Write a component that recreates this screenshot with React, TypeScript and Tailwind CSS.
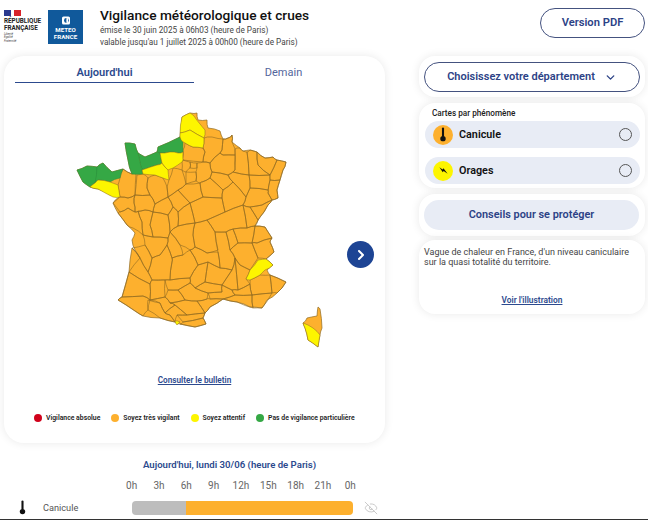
import { ChevronDown, ChevronRight, EyeOff } from "lucide-react";

const ORANGE = "#fdb02e";
const YELLOW = "#fdf500";
const GREEN = "#35a845";
const BORDER = "#8f6a22";

type Pt = [number, number];

const parse = (s: string): Pt[] =>
  s.split(" ").map((p) => p.split(",").map(Number) as Pt);

// wiggle every edge a bit so the borders don't look ruled. Same edge, same wiggle
const toPath = (s: string) => {
  const pts = parse(s);
  let d = "";
  pts.forEach((a, i) => {
    const b = pts[(i + 1) % pts.length];
    const sx = a[0] + b[0];
    const sy = a[1] + b[1];
    const mx = sx / 2 + Math.sin(sx * 12.9 + sy * 78.2) * 0.55;
    const my = sy / 2 + Math.sin(sx * 39.3 + sy * 17.7) * 0.55;
    d += `${i === 0 ? "M" : "L"}${a[0]},${a[1]} L${mx.toFixed(1)},${my.toFixed(1)} `;
  });
  return d + "Z";
};

const mainland =
  "190,113 197,113 198,120 207,120 208,128 220,131 223,139 228,138 232,135 232,142 240,148 243,151 250,150 257,152 265,158 273,157 277,160 286,162 283,170 280,180 277,190 278,198 272,200 268,205 260,217 255,226 265,227 272,238 270,242 274,252 266,259 273,265 267,270 270,275 286,282 277,293 267,300 262,308 250,307 237,302 223,299 210,307 205,313 203,318 206,324 195,327 180,324 175,322 160,318 143,316 135,311 118,300 122,297 129,272 132,248 140,258 135,250 132,240 135,233 127,225 118,213 113,203 119,197 110,195 98,189 90,187 83,182 77,170 87,166 97,167 103,163 112,172 123,169 132,174 128,160 125,143 135,144 138,153 145,157 157,152 158,147 180,137 182,117";

const corsica = "303,323 307,318 317,316 318,307 320,309 322,328 320,335 318,347 308,340 305,328";
const corsicaSud = "303,323 313,328 320,335 318,347 308,340 305,328";

const greens = [
  "157,152 158,147 180,137 183,142 183,152 178,153 170,152 160,153",
  "138,153 145,157 157,152 160,153 162,163 157,165 142,170 141,167",
  "125,143 135,144 138,153 141,167 142,170 143,174 132,174 128,160",
  "77,170 87,166 97,167 96,183 95,183 90,187 83,182",
  "97,167 103,163 112,172 123,169 120,178 110,182 98,180 95,183",
];

const yellows = [
  "182,117 190,113 194,116 200,124 205,130 204,138 190,130 180,133",
  "180,133 190,130 204,138 203,148 193,147 185,143 183,142 180,137",
  "95,183 98,180 110,182 118,185 120,197 113,197 98,189 90,187",
  "142,170 157,165 162,163 168,170 169,180 163,178 155,175 143,174",
  "160,153 170,152 178,153 183,152 183,160 182,162 173,168 168,170 162,163",
  "246,279 250,270 258,260 266,259 273,265 265,270 260,275 250,280",
  "175,321 180,322 177,325",
  corsicaSud,
];

const departments = [
  "120,178 118,185 120,197 128,198 135,195 136,174 132,174 123,169",
  "137,175 143,174 148,178 147,188 150,195 135,195",
  "148,178 155,175 163,178 167,187 168,197 155,204 150,195 147,188",
  "120,197 128,198 135,195 134,203 135,212 128,208 120,212 113,203",
  "135,195 150,195 155,204 153,212 145,210 135,212 134,203",
  "120,212 128,208 135,212 138,211 142,222 143,235 133,228 127,225 118,213",
  "138,211 145,210 153,212 150,225 153,237 143,235 142,222",
  "153,212 168,215 170,232 168,238 153,237 150,225",
  "155,204 168,197 173,207 168,215 153,212",
  "168,197 178,190 190,203 178,212 173,207",
  "168,215 173,207 178,212 178,226 170,232",
  "178,212 190,203 195,223 178,226",
  "169,180 173,168 182,170 186,184 178,190 168,197 167,187",
  "186,184 200,183 203,197 190,203 178,190",
  "183,157 183,160 203,162 205,152 203,148 193,147 185,143 183,150",
  "183,160 182,162 182,170 186,172 190,168 190,162",
  "190,162 197,163 197,168 190,168",
  "186,172 196,172 196,181 186,184",
  "197,163 203,162 210,163 212,172 210,178 202,182 200,183 196,181 196,172 197,168",
  "204,138 212,137 223,139 222,150 220,153 210,163 203,162 205,152 203,148",
  "223,139 228,138 232,135 232,142 235,149 235,155 223,155 220,153 222,150",
  "210,163 220,153 223,155 235,155 235,170 233,172 228,175 212,172",
  "210,178 212,172 228,175 233,182 223,190",
  "202,182 210,178 223,190 222,198 203,197 200,183",
  "235,149 240,148 243,151 247,152 249,175 233,172 235,170",
  "247,152 250,150 257,152 258,165 270,175 249,175",
  "257,152 265,158 273,157 277,160 270,175 258,165",
  "277,160 286,162 283,170 280,180 270,180 270,175",
  "270,180 280,180 277,190 278,198 272,200 268,193",
  "249,175 270,175 270,180 268,190 250,188",
  "250,188 268,190 268,193 272,200 262,205 250,207 243,205 246,197",
  "250,207 262,205 272,200 268,205 258,220",
  "243,205 250,207 258,220 255,226 247,228",
  "233,172 249,175 250,188 246,197 233,182 228,175",
  "223,190 233,182 246,197 243,205 225,212 222,198",
  "203,197 222,198 225,212 207,220 195,223 190,203",
  "207,220 225,212 243,205 247,228 233,229 226,232 215,232",
  "195,223 207,220 215,232 218,250 207,253 195,247 193,235",
  "178,226 195,223 193,235 195,247 190,250 180,245 170,232",
  "170,232 180,245 183,255 172,258 167,245 168,238",
  "143,235 153,237 168,238 167,245 160,255 152,258 145,245",
  "132,248 145,245 152,258 148,272 140,258",
  "152,258 160,255 167,245 172,258 172,262 170,280 152,280 148,272",
  "129,272 140,258 148,272 152,280 150,284",
  "195,247 207,253 218,252 220,268 208,262 198,265 190,250",
  "172,258 183,255 190,250 198,265 190,278 170,280 172,262",
  "198,265 208,262 205,282 195,288 190,283 190,278",
  "208,262 220,268 232,270 222,285 205,282",
  "215,232 226,232 230,250 235,258 232,270 220,268 218,252",
  "226,232 233,229 238,243 230,250",
  "233,229 247,228 255,226 252,243 238,243",
  "230,250 238,243 252,243 258,258 250,270 240,265 235,258",
  "255,226 265,227 272,238 257,243 252,243",
  "257,243 272,238 270,242 274,252 266,259 258,258 252,243",
  "235,258 240,265 250,270 246,279 250,284 238,290",
  "232,270 235,258 238,290 232,290 222,285",
  "205,282 222,285 222,292 208,293 195,288",
  "222,285 232,290 235,295 223,299 210,299 208,293 222,292",
  "232,290 238,290 250,284 252,295 235,295",
  "235,295 252,295 253,308 237,302 223,299",
  "252,295 272,293 262,308 253,308",
  "270,275 286,282 277,293 272,293",
  "250,280 260,275 270,275 272,293 252,295 250,284",
  "170,280 190,278 190,283 178,290 168,290 165,280",
  "190,283 195,288 208,293 207,299 197,301 185,300 178,290",
  "168,290 178,290 185,300 170,303 165,297",
  "170,303 185,300 197,301 205,313 187,315 175,305",
  "197,301 207,299 210,299 223,299 210,307 205,313",
  "187,315 205,313 203,318 183,322 177,315",
  "183,322 203,318 206,324 195,327 180,324",
  "175,305 187,315 177,315 175,322 170,315 165,313",
  "152,280 165,280 165,297 150,300 150,284",
  "129,272 150,284 150,300 143,296 122,297",
  "122,297 143,296 150,300 148,310 143,316 135,311 118,300",
  "148,300 160,303 165,313 170,315 175,322 160,318 148,310",
  "150,300 165,297 170,303 175,305 165,313 160,303",
];

const FranceMap = () => (
  <svg viewBox="70 105 260 245" className="h-[245px] w-[260px]" strokeLinejoin="round">
    <path d={toPath(mainland)} fill={ORANGE} stroke={BORDER} strokeWidth={0.7} />
    <path d={toPath(corsica)} fill={ORANGE} stroke={BORDER} strokeWidth={0.7} />
    {departments.map((d) => (
      <path key={d} d={toPath(d)} fill="none" stroke={BORDER} strokeWidth={0.6} />
    ))}
    {greens.map((g) => (
      <path key={g} d={toPath(g)} fill={GREEN} stroke="#2b8c3a" strokeWidth={0.5} />
    ))}
    {yellows.map((y) => (
      <path key={y} d={toPath(y)} fill={YELLOW} stroke={BORDER} strokeWidth={0.5} />
    ))}
  </svg>
);

const Thermometer = ({ className }: { className: string }) => (
  <svg viewBox="0 0 10 20" className={className} fill="#111">
    <rect x="3.6" y="0.5" width="2.8" height="13" rx="1.4" />
    <circle cx="5" cy="15.5" r="3.6" />
  </svg>
);

const Logos = () => (
  <div className="flex items-start gap-[6px]">
    <div className="w-[38px] pt-[10px]">
      <div className="flex h-[6px] w-[17px]">
        <div className="w-[7px] bg-[#2b3a8f]" />
        <div className="w-[3px] bg-white" />
        <div className="w-[7px] bg-[#d8232a]" />
      </div>
      <p className="mt-[2px] text-[6.3px] leading-[7px] font-bold text-[#222]">RÉPUBLIQUE</p>
      <p className="text-[6.3px] leading-[7px] font-bold text-[#222]">FRANÇAISE</p>
      <p className="mt-[1px] text-[3px] leading-[3.4px] italic text-[#444]">Liberté</p>
      <p className="text-[3px] leading-[3.4px] italic text-[#444]">Égalité</p>
      <p className="text-[3px] leading-[3.4px] italic text-[#444]">Fraternité</p>
    </div>
    <div className="mt-[10px] flex h-[34px] w-[35px] flex-col items-center bg-[#10599b] pt-[6px]">
      <svg viewBox="0 0 10 10" className="h-[9px] w-[8px]">
        <rect width="10" height="10" rx="2" fill="#fff" />
        <circle cx="5.5" cy="5" r="3" fill="#10599b" />
        <rect x="5.5" y="2" width="2" height="6" fill="#fff" />
      </svg>
      <p className="mt-[2px] text-[6.2px] leading-[6.5px] font-bold text-white">METEO</p>
      <p className="text-[6.2px] leading-[6.5px] font-bold text-white">FRANCE</p>
    </div>
  </div>
);

const hours = ["0h", "3h", "6h", "9h", "12h", "15h", "18h", "21h", "0h"];

const legend = [
  { label: "Vigilance absolue", color: "bg-[#d0021b]" },
  { label: "Soyez très vigilant", color: "bg-[#fdb02e]" },
  { label: "Soyez attentif", color: "bg-[#fdf500]" },
  { label: "Pas de vigilance particulière", color: "bg-[#35a845]" },
];

const cardShadow = "rounded-[16px] bg-white shadow-[0_0_10px_rgba(0,0,0,0.09)]";

export default function App() {
  return (
    <div className="relative h-[520px] w-[648px] overflow-hidden bg-white font-['Roboto',sans-serif]">
      <div className="flex h-[56px] items-start pl-1">
        <Logos />
        <div className="ml-[17px] pt-[7px]">
          <h1 className="text-[13.7px] leading-[17px] font-medium text-[#111]">Vigilance météorologique et crues</h1>
          <p className="mt-[1px] text-[8.2px] leading-[11px] text-[#444]">émise le 30 juin 2025 à 06h03 (heure de Paris)</p>
          <p className="mt-[1px] text-[8.2px] leading-[11px] text-[#444]">valable jusqu'au 1 juillet 2025 à 00h00 (heure de Paris)</p>
        </div>
        <button className="mt-[8px] mr-[3px] ml-auto flex h-[30px] w-[105px] items-center justify-center rounded-full border border-[#44527f] pt-px text-[11.2px] font-semibold text-[#2c4286]">
          Version PDF
        </button>
      </div>

      <div className="flex items-start pl-1">
        <div className="w-[381px]">
          <div className={`${cardShadow} relative flex h-[387px] flex-col rounded-[20px]`}>
            <div className="flex px-[11px] pt-[10px]">
              <div className="w-[179px] border-b-[1.5px] border-[#2c4a8e] pb-[3px] text-center text-[11.1px] leading-[13px] font-semibold text-[#2c4a8e]">
                Aujourd'hui
              </div>
              <div className="w-[179px] text-center text-[11px] leading-[13px] text-[#53669c]">Demain</div>
            </div>
            <div className="mt-[22px] pl-[66px]">
              <FranceMap />
            </div>
            <p className="mt-[24px] text-center text-[8.2px] leading-[12px] font-semibold text-[#2c4a8e] underline">
              Consulter le bulletin
            </p>
            <div className="mt-[26px] flex items-center gap-[11px] pl-[30px]">
              {legend.map((l) => (
                <div key={l.label} className="flex items-center gap-[4px]">
                  <span className={`h-[8px] w-[8px] rounded-full ${l.color}`} />
                  <span className="text-[6.85px] leading-[12px] font-semibold text-[#222]">{l.label}</span>
                </div>
              ))}
            </div>
            <button className="absolute top-[185px] left-[343px] flex h-[27px] w-[27px] items-center justify-center rounded-full bg-[#1d4494]">
              <ChevronRight size={16} strokeWidth={3} color="#fff" />
            </button>
          </div>

          <p className="mt-[15px] pl-[139px] text-[9.6px] leading-[13px] font-semibold text-[#2c4a8e]">
            Aujourd'hui, lundi 30/06 (heure de Paris)
          </p>
          <div className="mt-[9px] ml-[114px] grid w-[246px] grid-cols-9 text-center text-[10px] leading-[12px] text-[#666]">
            {hours.map((h, i) => (
              <span key={i}>{h}</span>
            ))}
          </div>
          <div className="mt-[8px] flex items-center">
            <Thermometer className="ml-[14px] h-[15px] w-[9px]" />
            <span className="ml-[16px] w-[89px] text-[9.2px] leading-[14px] text-[#555]">Canicule</span>
            <div className="flex h-[14px] w-[221px] overflow-hidden rounded-[4px]">
              <div className="w-[54px] bg-[#bdbdbd]" />
              <div className="flex-1 bg-[#fdb02e]" />
            </div>
            <EyeOff size={14} strokeWidth={1.5} color="#c4c4c4" className="ml-[11px]" />
          </div>
        </div>

        <div className="ml-[34px] flex w-[226px] flex-col">
          <div className={`${cardShadow} px-[5px] pt-[6px] pb-[5px]`}>
            <button className="flex h-[30px] w-[216px] items-center justify-center gap-[9px] rounded-full border border-[#44527f] text-[11px] font-semibold text-[#2c4286]">
              Choisissez votre département
              <ChevronDown size={13} strokeWidth={2.5} />
            </button>
          </div>
          <div className={`${cardShadow} mt-[6px] px-[6px] pt-[5px] pb-[4px]`}>
            <p className="pl-[7px] text-[8.2px] leading-[11px] font-medium text-[#222]">Cartes par phénomène</p>
            <div className="mt-[2px] flex h-[27px] w-[215px] items-center rounded-full bg-[#e8ecf5] pr-[8px] pl-[8px]">
              <span className="flex h-[20px] w-[20px] items-center justify-center rounded-full bg-[#fdb02e]">
                <Thermometer className="h-[15px] w-[8px]" />
              </span>
              <span className="mt-[2px] ml-[6px] text-[10.8px] font-semibold text-[#111]">Canicule</span>
              <span className="ml-auto h-[13px] w-[13px] rounded-full border border-[#555]" />
            </div>
            <div className="mt-[9px] flex h-[27px] w-[215px] items-center rounded-full bg-[#e8ecf5] pr-[8px] pl-[8px]">
              <span className="flex h-[20px] w-[20px] items-center justify-center rounded-full bg-[#fdf500]">
                <svg viewBox="0 0 12 12" className="h-[11px] w-[11px]" fill="#111">
                  <path d="M1.5 2.5 L5 5 L6 3.5 L10.5 9.5 L6.2 6.6 L5.2 8 Z" />
                </svg>
              </span>
              <span className="mt-[2px] ml-[6px] text-[10.8px] font-semibold text-[#111]">Orages</span>
              <span className="ml-auto h-[13px] w-[13px] rounded-full border border-[#555]" />
            </div>
          </div>
          <div className={`${cardShadow} mt-[6px] px-[5px] py-[6px]`}>
            <button className="flex h-[30px] w-[215px] items-center justify-center rounded-full bg-[#e8ecf5] text-[10.9px] font-semibold text-[#2c4286]">
              Conseils pour se protéger
            </button>
          </div>
          <div className={`${cardShadow} mt-[4px] flex h-[74px] flex-col rounded-[10px] px-[5px] pt-[7px]`}>
            <p className="w-[214px] text-[9px] leading-[10px] text-[#444]">
              Vague de chaleur en France, d'un niveau caniculaire sur la quasi totalité du territoire.
            </p>
            <p className="mt-auto mb-[8px] text-center text-[8.4px] leading-[11px] font-semibold text-[#2c4a8e] underline">
              Voir l'illustration
            </p>
          </div>
        </div>
      </div>

      <div className="absolute right-0 bottom-0 left-0 h-px bg-[#333]" />
    </div>
  );
}
